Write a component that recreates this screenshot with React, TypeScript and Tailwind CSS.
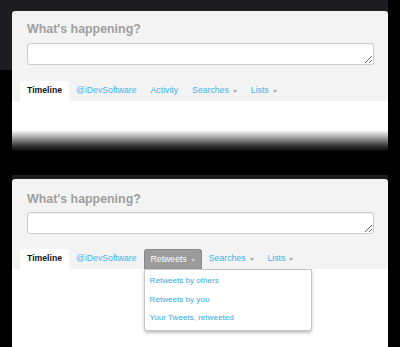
import React from "react";

type Tab = {
  label: string;
  caret?: boolean;
  active?: boolean;
  open?: boolean;
};

const firstTabs: Tab[] = [
  { label: "Timeline", active: true },
  { label: "@iDevSoftware" },
  { label: "Activity" },
  { label: "Searches", caret: true },
  { label: "Lists", caret: true },
];

const secondTabs: Tab[] = [
  { label: "Timeline", active: true },
  { label: "@iDevSoftware" },
  { label: "Retweets", caret: true, open: true },
  { label: "Searches", caret: true },
  { label: "Lists", caret: true },
];

const retweetItems = ["Retweets by others", "Retweets by you", "Your Tweets, retweeted"];

function Caret({ light }: { light?: boolean }) {
  return (
    <span
      className={`ml-[4px] mt-[1px] inline-block h-0 w-0 border-x-[2.5px] border-t-[3px] border-x-transparent ${
        light ? "border-t-[#c8c8c8]" : "border-t-[#ababab]"
      }`}
    />
  );
}

function TabItem({ tab }: { tab: Tab }) {
  if (tab.active) {
    return (
      <div className="flex h-[20px] items-center rounded-t-[3px] bg-white px-[7px] text-[8.7px] font-bold text-[#141414]">
        {tab.label}
      </div>
    );
  }
  if (tab.open) {
    return (
      <div className="relative">
        <div className="flex h-[20px] items-center rounded-t-[3px] border border-b-0 border-[#8a8a8a] bg-[#9b9b9b] px-[6px] text-[8.7px] text-white">
          {tab.label}
          {tab.caret && <Caret light />}
        </div>
        {/* dropdown menu */}
        <div className="absolute left-0 top-full z-10 w-[168px] rounded-b-[3px] border border-[#c6c6c6] bg-white py-[2px] shadow-[0_2px_3px_rgba(0,0,0,0.25)]">
          {retweetItems.map((item) => (
            <div key={item} className="whitespace-nowrap px-[5px] text-[8.1px] leading-[18.6px] text-[#35ace4]">
              {item}
            </div>
          ))}
        </div>
      </div>
    );
  }
  return (
    <div className="flex h-[20px] items-center px-[7px] text-[8.7px] text-[#3db4ea]">
      {tab.label}
      {tab.caret && <Caret />}
    </div>
  );
}

function ComposeHeader({ tabs, second }: { tabs: Tab[]; second?: boolean }) {
  return (
    <div className={`rounded-t-[3px] bg-[#f3f3f3] ${second ? "pt-[13px]" : "pt-[11px]"}`}>
      <div className="px-[15px]">
        <div className="text-[12.4px] font-bold leading-[15px] text-[#9f9f9f]">What's happening?</div>
        <textarea
          className={`block h-[22px] w-[347px] rounded-[3px] border border-[#cccccc] bg-white shadow-[inset_0_1px_1px_rgba(0,0,0,0.06)] outline-none ${
            second ? "mt-[5px]" : "mt-[6px]"
          }`}
          defaultValue=""
        />
      </div>
      <div className={`flex pl-[8px] ${second ? "mt-[15px]" : "mt-[16px]"}`}>
        {tabs.map((t) => (
          <TabItem key={t.label} tab={t} />
        ))}
      </div>
    </div>
  );
}

export default function App() {
  return (
    <div className="h-[347px] w-[400px] overflow-hidden bg-black font-['Liberation_Sans',Arial,sans-serif]">
      {/* first capture, fades out */}
      <div className="w-[388px] bg-[linear-gradient(to_bottom,#1d1d21_70px,#000_70px)] pl-[12px] pt-[11px]">
        <div className="w-[376px]">
          <ComposeHeader tabs={firstTabs} />
          <div className="h-[29px] bg-white" />
          <div className="h-[22px] bg-[linear-gradient(to_bottom,#ffffff,#b0b0b0_30%,#3a3a3a_70%,#000)]" />
        </div>
      </div>

      {/* second capture */}
      <div className="ml-[12px] mt-[23px] h-[4px] w-[376px] bg-[#1d1d1f]" />
      <div className="ml-[12px] w-[376px]">
        <ComposeHeader tabs={secondTabs} second />
        <div className="h-[90px] bg-white" />
      </div>
    </div>
  );
}
